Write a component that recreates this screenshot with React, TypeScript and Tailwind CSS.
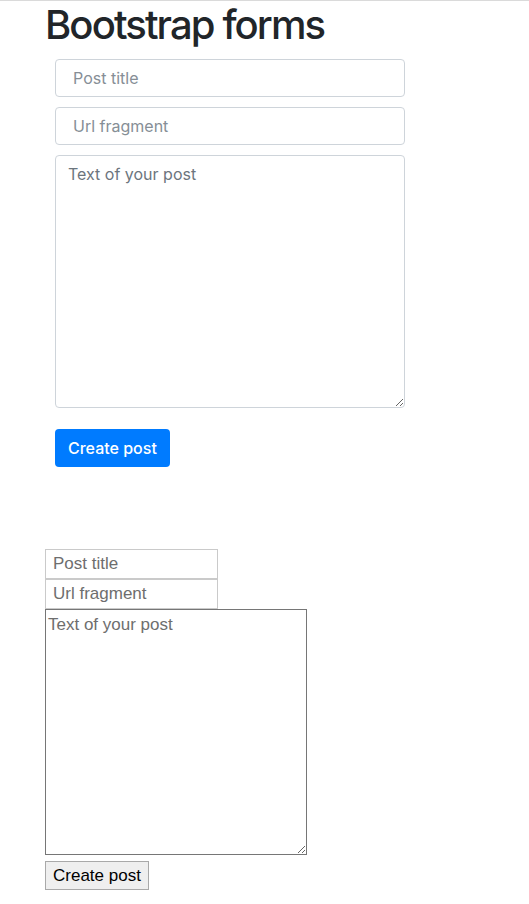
export default function App() {
  return (
    <div className="min-h-[904px] border-t border-[#dadada] bg-white">
      <div className="pl-[45px]">
        <h1 className="m-0 font-['Inter',sans-serif] text-[40px] font-medium leading-[48px] tracking-[-1.9px] text-[#212529]">
          Bootstrap forms
        </h1>

        <form className="ml-[10px] mt-[10px] flex w-[350px] flex-col gap-[10px] font-['Inter',sans-serif]">
          <input
            type="text"
            placeholder="Post title"
            className="h-[38px] rounded border border-[#ced4da] px-[17px] text-base text-[#495057] placeholder:text-[#868e96]"
          />
          <input
            type="text"
            placeholder="Url fragment"
            className="h-[38px] rounded border border-[#ced4da] px-[17px] text-base text-[#495057] placeholder:text-[#868e96]"
          />
          <textarea
            placeholder="Text of your post"
            className="h-[253px] rounded border border-[#ced4da] px-3 py-[6px] text-base text-[#495057] placeholder:text-[#6c757d]"
          />
          <div className="mt-[11px]">
            <button
              type="button"
              className="h-[38px] rounded bg-[#007bff] px-[13px] text-base font-medium text-white"
            >
              Create post
            </button>
          </div>
        </form>

        <form className="mt-[82px] flex flex-col items-start font-['Liberation_Sans',sans-serif] text-[17px]">
          <input
            type="text"
            placeholder="Post title"
            className="h-[30px] w-[173px] border border-[#cacaca] px-[7px] placeholder:text-[#6e6e6e]"
          />
          <input
            type="text"
            placeholder="Url fragment"
            className="h-[30px] w-[173px] border border-[#cacaca] px-[7px] placeholder:text-[#6e6e6e]"
          />
          <textarea
            placeholder="Text of your post"
            className="h-[246px] w-[262px] border border-[#767676] px-[2px] py-[2px] placeholder:text-[#6e6e6e]"
          />
          <button
            type="button"
            className="mt-[6px] h-[29px] border border-[#a9a9a9] bg-[#efefef] px-[7px] text-black"
          >
            Create post
          </button>
        </form>
      </div>
    </div>
  )
}
